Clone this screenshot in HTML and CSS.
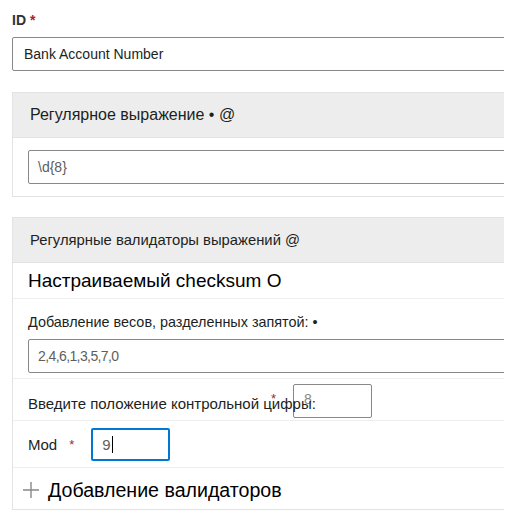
FILE: index.html
```html
<!DOCTYPE html>
<html lang="ru">
<head>
<meta charset="utf-8">
<title>Validator</title>
<link rel="stylesheet" href="styles.css">
</head>
<body>
<div class="page">
  <div class="field-label">ID <span class="req">*</span></div>
  <div class="text-input main-input">Bank Account Number</div>

  <section class="panel panel-regex">
    <div class="panel-header header-lg">Регулярное выражение • @</div>
    <div class="panel-body">
      <div class="text-input placeholder">\d{8}</div>
    </div>
  </section>

  <section class="panel panel-validators">
    <div class="panel-header header-md">Регулярные валидаторы выражений @</div>
    <div class="row title-row">Настраиваемый checksum O</div>
    <div class="row weights-row">
      <div class="small-label">Добавление весов, разделенных запятой: •</div>
      <div class="text-input placeholder digits">2,4,6,1,3,5,7,0</div>
    </div>
    <div class="row check-row">
      <div class="check-input"><span class="check-val">8</span></div>
      <span class="small-label check-label">Введите положение контрольной цифры:</span>
      <span class="req check-req">*</span>
    </div>
    <div class="row mod-row">
      <span class="small-label mod-label">Mod</span>
      <span class="req mod-req">*</span>
      <div class="mod-input">9<span class="caret"></span></div>
    </div>
    <div class="row add-row">
      <svg class="plus" width="18" height="18" viewBox="0 0 18 18" aria-hidden="true">
        <path d="M9 1v16M1 9h16" stroke="#8a8886" stroke-width="1.4" fill="none"/>
      </svg>
      <span class="add-text">Добавление валидаторов</span>
    </div>
  </section>
</div>
</body>
</html>
```

FILE: styles.css
```css
html, body {
  margin: 0;
  padding: 0;
  background: #ffffff;
}
body {
  font-family: "Liberation Sans", Arial, sans-serif;
  color: #201f1e;
}
.page {
  margin-left: 12px;
  width: 492px;
  overflow: hidden;
  padding-top: 12px;
  padding-bottom: 16px;
}
.field-label {
  font-size: 14px;
  font-weight: bold;
  color: #323130;
  line-height: 16px;
  height: 16px;
  padding-bottom: 9px;
}
.req {
  color: #a4262c;
}
.text-input {
  box-sizing: border-box;
  width: 520px;
  height: 34px;
  border: 1px solid #8a8886;
  border-radius: 2px;
  padding-left: 11px;
  font-size: 14px;
  line-height: 32px;
  color: #201f1e;
  white-space: nowrap;
}
.text-input.placeholder {
  color: #605e5c;
  padding-left: 9px;
}
.text-input.digits {
  letter-spacing: -0.6px;
}
.panel {
  box-sizing: border-box;
  width: 520px;
  border: 1px solid #e3e3e3;
  background: #fff;
}
.panel-regex {
  margin-top: 21px;
}
.panel-validators {
  margin-top: 20px;
}
.panel-header {
  background: #ededed;
  height: 44px;
  border-bottom: 1px solid #e3e3e3;
  padding-left: 17px;
  display: flex;
  align-items: center;
  color: #201f1e;
}
.header-lg {
  font-size: 16px;
}
.header-md {
  font-size: 14.8px;
}
.panel-body {
  padding: 12px 0 12px 15px;
}
.row {
  border-bottom: 1px solid #eeeeee;
  padding-left: 15px;
}
.title-row {
  height: 35px;
  display: flex;
  align-items: center;
  font-size: 19px;
  color: #000;
}
.small-label {
  font-size: 14.4px;
  color: #201f1e;
}
.weights-row {
  padding-top: 15px;
  padding-bottom: 5px;
}
.weights-row .small-label {
  height: 16px;
  line-height: 16px;
  margin-bottom: 9px;
}
.check-row {
  position: relative;
  height: 42px;
  display: flex;
  align-items: center;
  padding-top: 8px;
  box-sizing: border-box;
}
.check-label {
  position: relative;
  font-size: 15px;
}
.check-req {
  position: absolute;
  left: 258px;
  top: 12px;
  font-size: 13px;
}
.check-input {
  position: absolute;
  left: 280px;
  top: 5px;
  box-sizing: border-box;
  width: 79px;
  height: 34px;
  border: 1px solid #8a8886;
  border-radius: 2px;
}
.check-val {
  position: absolute;
  left: 10px;
  top: 6px;
  font-size: 14px;
  color: #8a8886;
}
.mod-row {
  height: 47px;
  display: flex;
  align-items: center;
  box-sizing: border-box;
}
.mod-label {
  font-size: 15px;
}
.mod-req {
  margin-left: 12px;
  font-size: 13px;
  align-self: flex-start;
  margin-top: 16px;
}
.mod-input {
  box-sizing: border-box;
  margin-left: 17px;
  width: 79px;
  height: 33px;
  border: 2px solid #0078d4;
  border-radius: 2px;
  padding-left: 9px;
  font-size: 15px;
  line-height: 29px;
  color: #605e5c;
  display: flex;
  align-items: center;
}
.caret {
  display: inline-block;
  width: 1px;
  height: 17px;
  background: #000;
  margin-left: 1px;
}
.add-row {
  border-bottom: none;
  height: 41px;
  display: flex;
  align-items: center;
  padding-left: 9px;
  padding-top: 3px;
  box-sizing: border-box;
}
.plus {
  display: block;
  margin-right: 8px;
}
.add-text {
  font-size: 19.6px;
  color: #000;
}
```
